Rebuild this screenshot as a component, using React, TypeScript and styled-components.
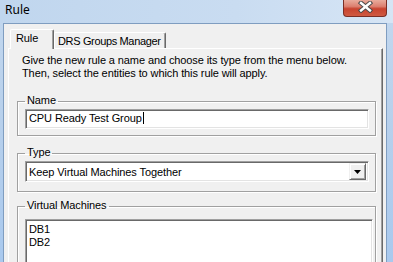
import styled, { createGlobalStyle } from "styled-components";

const GlobalStyle = createGlobalStyle`
  html, body {
    margin: 0;
    padding: 0;
    background: #fff;
  }
`;

const Window = styled.div`
  width: 393px;
  height: 262px;
  overflow: hidden;
  display: flex;
  flex-direction: column;
  background: linear-gradient(to bottom, #c3d8ef 0%, #b9d1ec 40%, #a9c9ee 100%);
  font-family: "Liberation Sans", Arial, sans-serif;
  font-size: 11px;
  letter-spacing: -0.1px;
  color: #000;
`;

const TitleBar = styled.div`
  height: 23px;
  flex-shrink: 0;
  display: flex;
  justify-content: space-between;
  align-items: flex-start;
  background: linear-gradient(to right, #c0d6ee 0%, #c9dcf1 60%, #d6e5f5 100%);
`;

const Title = styled.span`
  font-family: "Noto Sans", "Open Sans", sans-serif;
  font-size: 12px;
  letter-spacing: 0;
  line-height: 16px;
  padding: 2px 0 0 5px;
`;

const CloseButton = styled.div`
  width: 44px;
  height: 17px;
  margin-right: 6px;
  box-sizing: border-box;
  border: 1px solid #7a2e25;
  border-top: none;
  border-radius: 0 0 4px 4px;
  background: linear-gradient(to bottom, #e9ab9c 0%, #dc8070 40%, #c8432f 55%, #cf5a42 100%);
  display: flex;
  align-items: flex-start;
  justify-content: center;
  padding-top: 1px;
`;

const Client = styled.div`
  flex: 1;
  margin: 0 6px 0 3px;
  border: 1px solid #7f9dc0;
  border-bottom: none;
  background: #f0f0f0;
  padding: 5px 3px 0 4px;
  display: flex;
  flex-direction: column;
`;

const TabStrip = styled.div`
  height: 19px;
  display: flex;
  align-items: flex-end;
  padding-left: 2px;
  position: relative;
  z-index: 1;
`;

const Tab = styled.div<{ $active?: boolean }>`
  box-sizing: border-box;
  height: ${(p) => (p.$active ? "20px" : "16px")};
  margin-bottom: ${(p) => (p.$active ? "-1px" : "0")};
  min-width: ${(p) => (p.$active ? "44px" : "0")};
  padding: 2px 4px 0 ${(p) => (p.$active ? "5px" : "3px")};
  line-height: 13px;
  letter-spacing: ${(p) => (p.$active ? "-0.1px" : "-0.35px")};
  background: #f0f0f0;
  border-top: 1px solid #fff;
  border-left: 1px solid #fff;
  border-right: 1px solid #696969;
  border-radius: 2px 2px 0 0;
  box-shadow: inset -1px 0 0 #a0a0a0;
  white-space: nowrap;
`;

const TabPage = styled.div`
  flex: 1;
  border: 1px solid;
  border-color: #fff #696969 #696969 #fff;
  box-shadow: inset -1px -1px 0 #a0a0a0;
  padding: 5px 7px 0 8px;
`;

const Intro = styled.p`
  margin: 0 0 0 5px;
  line-height: 13px;
`;

const Group = styled.fieldset<{ $gap: number; $padBottom: number }>`
  margin: ${(p) => p.$gap}px 0 0 0;
  padding: 0 6px ${(p) => p.$padBottom}px 7px;
  width: 359px;
  box-sizing: border-box;
  border: 1px solid #a0a0a0;
  box-shadow: inset 1px 1px 0 #fff, 1px 1px 0 #fff;
  min-width: 0;
`;

const Legend = styled.legend`
  padding: 0 2px 2px;
  line-height: 13px;
`;

const Sunken = styled.div`
  box-sizing: border-box;
  background: #fff;
  border: 1px solid;
  border-color: #a0a0a0 #fff #fff #a0a0a0;
  box-shadow: inset 1px 1px 0 #696969, inset -1px -1px 0 #e3e3e3;
  line-height: 13px;
`;

const TextInput = styled(Sunken)`
  height: 20px;
  padding: 2px 3px 0 3px;
  display: flex;
  align-items: flex-start;
`;

const Caret = styled.span`
  display: inline-block;
  width: 1px;
  height: 12px;
  margin-left: 1px;
  background: #000;
`;

const Combo = styled(Sunken)`
  height: 21px;
  padding: 2px 2px 0 3px;
  display: flex;
  justify-content: space-between;
  align-items: flex-start;
`;

const ComboText = styled.span`
  padding-top: 2px;
`;

const DropButton = styled.div`
  width: 17px;
  height: 17px;
  box-sizing: border-box;
  margin-top: -1px;
  background: #f0f0f0;
  border: 1px solid;
  border-color: #f0f0f0 #696969 #696969 #f0f0f0;
  box-shadow: inset 1px 1px 0 #fff, inset -1px -1px 0 #a0a0a0;
  display: flex;
  align-items: center;
  justify-content: center;
`;

const ListBox = styled(Sunken)`
  width: 348px;
  height: 80px;
  margin-top: 5px;
  padding: 3px 3px 0 3px;
`;

const ListItem = styled.div`
  line-height: 13px;
`;

function CloseGlyph() {
  return (
    <svg width="17" height="12" viewBox="0 0 17 12">
      <path d="M4 2 L13 9.5 M13 2 L4 9.5" stroke="#4a4a4a" strokeWidth="4.4" strokeLinecap="square" />
      <path d="M4 2 L13 9.5 M13 2 L4 9.5" stroke="#fff" strokeWidth="2.4" strokeLinecap="square" />
    </svg>
  );
}

function Arrow() {
  return (
    <svg width="7" height="4" viewBox="0 0 7 4">
      <path d="M0 0 H7 L3.5 4 Z" fill="#000" />
    </svg>
  );
}

const machines = ["DB1", "DB2"];

export default function App() {
  return (
    <>
      <GlobalStyle />
      <Window>
        <TitleBar>
          <Title>Rule</Title>
          <CloseButton>
            <CloseGlyph />
          </CloseButton>
        </TitleBar>
        <Client>
          <TabStrip>
            <Tab $active>Rule</Tab>
            <Tab>DRS Groups Manager</Tab>
          </TabStrip>
          <TabPage>
            <Intro>
              Give the new rule a name and choose its type from the menu below.
              <br />
              Then, select the entities to which this rule will apply.
            </Intro>
            <Group $gap={14} $padBottom={6}>
              <Legend>Name</Legend>
              <TextInput>
                <span>CPU Ready Test Group</span>
                <Caret />
              </TextInput>
            </Group>
            <Group $gap={10} $padBottom={9}>
              <Legend>Type</Legend>
              <Combo>
                <ComboText>Keep Virtual Machines Together</ComboText>
                <DropButton>
                  <Arrow />
                </DropButton>
              </Combo>
            </Group>
            <Group $gap={7} $padBottom={6}>
              <Legend>Virtual Machines</Legend>
              <ListBox>
                {machines.map((m) => (
                  <ListItem key={m}>{m}</ListItem>
                ))}
              </ListBox>
            </Group>
          </TabPage>
        </Client>
      </Window>
    </>
  );
}
